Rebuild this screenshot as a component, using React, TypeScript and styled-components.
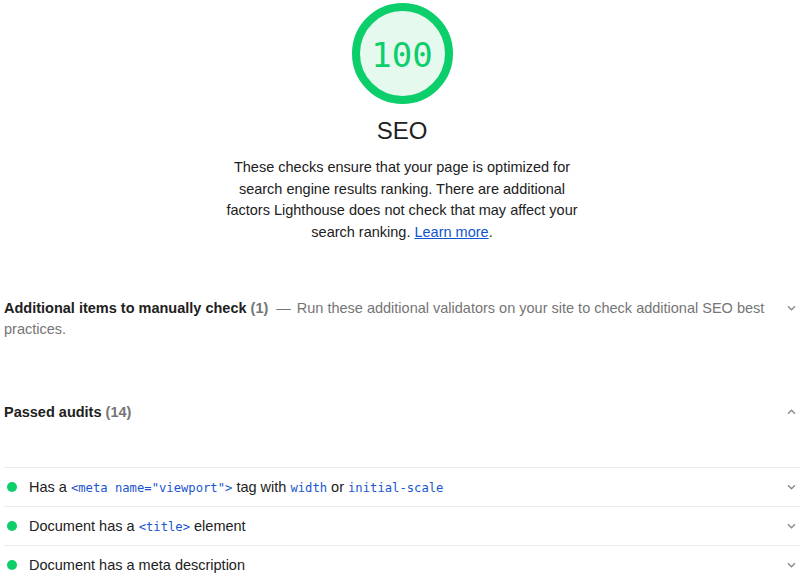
import React from "react";
import styled, { createGlobalStyle } from "styled-components";

const Global = createGlobalStyle`
  html, body { margin: 0; padding: 0; background: #fff; }
  body { font-family: "Liberation Sans", Arial, sans-serif; color: #212121; }
`;

const Page = styled.div`
  width: 800px;
  height: 584px;
  overflow: hidden;
  padding: 3px 0 0 4px;
  box-sizing: border-box;
`;

const Header = styled.header`
  display: flex;
  flex-direction: column;
  align-items: center;
`;

const GaugeWrap = styled.div`
  position: relative;
  width: 101px;
  height: 101px;
`;

const GaugeText = styled.div`
  position: absolute;
  inset: 0;
  display: flex;
  align-items: center;
  justify-content: center;
  font-family: "DejaVu Sans Mono", "Liberation Mono", monospace;
  font-size: 34px;
  color: #0cce6b;
  padding-top: 2px;
`;

const Title = styled.h2`
  margin: 11px 0 0;
  font-size: 24px;
  font-weight: 400;
  line-height: 32px;
  color: #212121;
`;

const Description = styled.p`
  margin: 10px 0 0;
  width: 362px;
  text-align: center;
  font-size: 14.5px;
  line-height: 21.7px;
  color: #212121;
  a { color: #1155cc; text-decoration: underline; }
`;

const Group = styled.section<{ $top: number }>`
  margin-top: ${(p) => p.$top}px;
  display: flex;
  align-items: flex-start;
`;

const GroupText = styled.div`
  flex: 1;
  font-size: 14.5px;
  line-height: 21px;
  color: #757575;
`;

const GroupTitle = styled.span`
  font-weight: 700;
  color: #212121;
`;

const Count = styled.span`
  font-weight: 700;
  color: #757575;
`;

const Dash = styled.span`
  margin: 0 6px 0 8px;
`;

const Chevron = styled.span<{ $up?: boolean }>`
  width: 16px;
  height: 21px;
  display: flex;
  align-items: center;
  justify-content: flex-end;
  margin-right: 4px;
  svg { transform: ${(p) => (p.$up ? "rotate(180deg)" : "none")}; }
`;

const List = styled.div`
  margin-top: 44px;
  border-top: 1px solid #ebebeb;
`;

const Row = styled.div`
  height: 38px;
  display: flex;
  align-items: center;
  border-bottom: 1px solid #ebebeb;
  font-size: 14.5px;
  color: #212121;
`;

const Dot = styled.span`
  width: 10px;
  height: 10px;
  border-radius: 50%;
  background: #0cce6b;
  margin: 0 12px 0 3px;
`;

const RowText = styled.span`
  flex: 1;
`;

const Code = styled.code`
  font-family: "DejaVu Sans Mono", "Liberation Mono", monospace;
  font-size: 12.2px;
  color: #1a56cf;
`;

const ChevronIcon = () => (
  <svg width="9" height="6" viewBox="0 0 9 6">
    <path d="M1 1.2l3.5 3.5 3.5-3.5" fill="none" stroke="#8a8a8a" strokeWidth="1.4" />
  </svg>
);

export default function App() {
  return (
    <Page>
      <Global />
      <Header>
        <GaugeWrap>
          <svg width="101" height="101" viewBox="0 0 101 101">
            <circle cx="50.5" cy="50.5" r="46.5" fill="#e6f9ef" stroke="#0cce6b" strokeWidth="8" />
          </svg>
          <GaugeText>100</GaugeText>
        </GaugeWrap>
        <Title>SEO</Title>
        <Description>
          These checks ensure that your page is optimized for search engine results ranking. There are
          additional factors Lighthouse does not check that may affect your search ranking.{" "}
          <a href="#">Learn more</a>.
        </Description>
      </Header>

      <Group $top={54}>
        <GroupText>
          <GroupTitle>Additional items to manually check</GroupTitle> <Count>(1)</Count>
          <Dash>—</Dash>Run these additional validators on your site to check additional SEO best practices.
        </GroupText>
        <Chevron>
          <ChevronIcon />
        </Chevron>
      </Group>

      <Group $top={62}>
        <GroupText>
          <GroupTitle>Passed audits</GroupTitle> <Count>(14)</Count>
        </GroupText>
        <Chevron $up>
          <ChevronIcon />
        </Chevron>
      </Group>

      <List>
        <Row>
          <Dot />
          <RowText>
            Has a <Code>&lt;meta name="viewport"&gt;</Code> tag with <Code>width</Code> or{" "}
            <Code>initial-scale</Code>
          </RowText>
          <Chevron>
            <ChevronIcon />
          </Chevron>
        </Row>
        <Row>
          <Dot />
          <RowText>
            Document has a <Code>&lt;title&gt;</Code> element
          </RowText>
          <Chevron>
            <ChevronIcon />
          </Chevron>
        </Row>
        <Row>
          <Dot />
          <RowText>Document has a meta description</RowText>
          <Chevron>
            <ChevronIcon />
          </Chevron>
        </Row>
      </List>
    </Page>
  );
}
